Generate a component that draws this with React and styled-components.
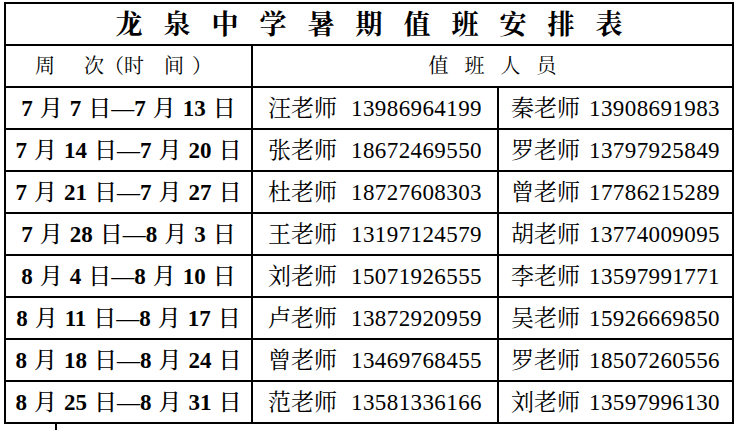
import React from 'react'
import styled, { createGlobalStyle } from 'styled-components'

const GlobalStyle = createGlobalStyle`
  html, body {
    margin: 0;
    padding: 0;
    background: #fff;
    overflow: hidden;
  }
`

const serif = `"Liberation Serif", "Noto Serif CJK SC", "Noto Sans CJK SC", serif`

const Page = styled.div`
  width: 737px;
  height: 430px;
  padding: 2px 0 0 4px;
  box-sizing: border-box;
  font-family: ${serif};
  color: #000;
`

const Table = styled.table`
  border-collapse: collapse;
  table-layout: fixed;
  width: 728px;
  border: 2px solid #000;
`

const Row = styled.tr`
  height: 42px;
`

const Cell = styled.td`
  border: 2px solid #000;
  padding: 0;
  text-align: center;
  vertical-align: middle;
  white-space: nowrap;
  font-size: ${p => p.$size || 23}px;
  font-weight: ${p => p.$weight || 400};
  letter-spacing: ${p => p.$spacing || 0}px;
  line-height: 1;
`

const Title = styled(Cell)`
  font-size: 27px;
  font-weight: 700;
  letter-spacing: 21px;
  padding: 2px 0 0 21px;
`

const HeadCell = styled(Cell)`
  font-size: 20px;
  padding-right: ${p => p.$shift || 0}px;
  padding-left: ${p => p.$indent || 0}px;
`

const Gap = styled.span`
  display: inline-block;
  width: ${p => p.$w}px;
`

const Num = styled.span`
  font-weight: 700;
`

const Phone = styled.span`
  letter-spacing: 0.4px;
`

const Stub = styled.div`
  margin-left: 51px;
  width: 0;
  height: 12px;
  border-left: 2px solid #000;
`

const rows = [
  [7, 7, 7, 13, '汪', '13986964199', '秦', '13908691983'],
  [7, 14, 7, 20, '张', '18672469550', '罗', '13797925849'],
  [7, 21, 7, 27, '杜', '18727608303', '曾', '17786215289'],
  [7, 28, 8, 3, '王', '13197124579', '胡', '13774009095'],
  [8, 4, 8, 10, '刘', '15071926555', '李', '13597991771'],
  [8, 11, 8, 17, '卢', '13872920959', '吴', '15926669850'],
  [8, 18, 8, 24, '曾', '13469768455', '罗', '18507260556'],
  [8, 25, 8, 31, '范', '13581336166', '刘', '13597996130'],
]

function Period({ m1, d1, m2, d2 }) {
  return (
    <>
      <Num>{m1}</Num><Gap $w={7} />月<Gap $w={7} /><Num>{d1}</Num><Gap $w={7} />日—
      <Num>{m2}</Num><Gap $w={7} />月<Gap $w={7} /><Num>{d2}</Num><Gap $w={7} />日
    </>
  )
}

function Teacher({ name, phone, gap }) {
  return (
    <>
      {name}老师<Gap $w={gap} /><Phone>{phone}</Phone>
    </>
  )
}

export default function App() {
  return (
    <>
      <GlobalStyle />
      <Page>
        <Table>
          <colgroup>
            <col style={{ width: 247 }} />
            <col style={{ width: 246 }} />
            <col style={{ width: 235 }} />
          </colgroup>
          <tbody>
            <Row>
              <Title colSpan={3}>龙泉中学暑期值班安排表</Title>
            </Row>
            <Row>
              <HeadCell $shift={10}>
                周<Gap $w={29} />次（时<Gap $w={20} />间<Gap $w={8} />）
              </HeadCell>
              <HeadCell colSpan={2} $spacing={16} $indent={16}>
                值班人员
              </HeadCell>
            </Row>
            {rows.map(r => (
              <Row key={`${r[0]}-${r[1]}`}>
                <Cell $weight={500}>
                  <Period m1={r[0]} d1={r[1]} m2={r[2]} d2={r[3]} />
                </Cell>
                <Cell>
                  <Teacher name={r[4]} phone={r[5]} gap={14} />
                </Cell>
                <Cell>
                  <Teacher name={r[6]} phone={r[7]} gap={9} />
                </Cell>
              </Row>
            ))}
          </tbody>
        </Table>
        <Stub />
      </Page>
    </>
  )
}
